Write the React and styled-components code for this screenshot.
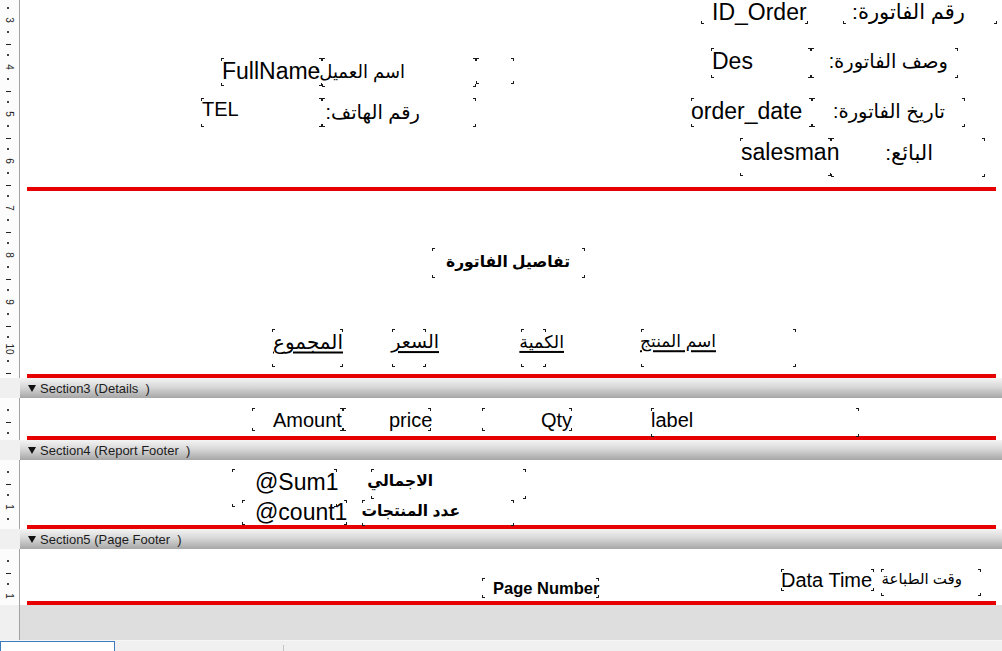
import React from "react";
import styled, { createGlobalStyle } from "styled-components";

const RED = "#e60000";
const UNIT = 47;
const FONT = `"Liberation Sans", Arial, "DejaVu Sans", sans-serif`;

const GlobalStyle = createGlobalStyle`
  html, body {
    margin: 0;
    padding: 0;
    background: #fff;
    overflow: hidden;
  }
  #root {
    width: 1002px;
    height: 651px;
  }
`;

const headFields = [
  { x: 701, y: -6, w: 107, h: 30, text: "ID_Order", size: 23, tx: 712, ty: 12 },
  { x: 843, y: -6, w: 154, h: 30, text: "رقم الفاتورة:", size: 21, rtl: true, tx: 965, ty: 12 },
  { x: 711, y: 48, w: 100, h: 30, text: "Des", size: 23, tx: 712, ty: 61 },
  { x: 811, y: 48, w: 147, h: 30, text: "وصف الفاتورة:", size: 19.5, rtl: true, tx: 948, ty: 61 },
  { x: 476, y: 58, w: 38, h: 26 },
  { x: 221, y: 58, w: 101, h: 28, text: "FullName", size: 23, tx: 222, ty: 71 },
  { x: 322, y: 58, w: 154, h: 29, text: "اسم العميل:", size: 18, rtl: true, tx: 405, ty: 72 },
  { x: 201, y: 98, w: 121, h: 29, text: "TEL", size: 20, tx: 202, ty: 109 },
  { x: 322, y: 98, w: 154, h: 29, text: "رقم الهاتف:", size: 19.5, rtl: true, tx: 420, ty: 112 },
  { x: 691, y: 98, w: 121, h: 29, text: "order_date", size: 23, tx: 691, ty: 111 },
  { x: 812, y: 98, w: 153, h: 29, text: "تاريخ الفاتورة:", size: 19.5, rtl: true, tx: 945, ty: 111 },
  { x: 740, y: 138, w: 91, h: 38, text: "salesman", size: 23, tx: 741, ty: 152 },
  { x: 831, y: 138, w: 154, h: 39, text: "البائع:", size: 21, rtl: true, tx: 933, ty: 153 },
  { x: 432, y: 248, w: 153, h: 30, text: "تفاصيل الفاتورة", size: 15.5, bold: true, rtl: true, tx: 570, ty: 262 },
  { x: 272, y: 329, w: 71, h: 38, text: "المجموع", size: 20, under: true, rtl: true, tx: 343, ty: 342 },
  { x: 392, y: 329, w: 34, h: 38, text: "السعر", size: 19, under: true, rtl: true, tx: 439, ty: 342 },
  { x: 521, y: 329, w: 25, h: 38, text: "الكمية", size: 17.5, under: true, rtl: true, tx: 564, ty: 342 },
  { x: 641, y: 329, w: 155, h: 38, text: "اسم المنتج", size: 17, under: true, rtl: true, tx: 716, ty: 342 },
];

const detailFields = [
  { x: 252, y: 408, w: 91, h: 23, text: "Amount", size: 20, tx: 273, ty: 420 },
  { x: 343, y: 408, w: 88, h: 23, text: "price", size: 20, tx: 389, ty: 420 },
  { x: 482, y: 408, w: 90, h: 23, text: "Qty", size: 20, tx: 541, ty: 420 },
  { x: 651, y: 408, w: 208, h: 29, text: "label", size: 20, tx: 651, ty: 420 },
];

const footerFields = [
  { x: 232, y: 469, w: 105, h: 38, text: "@Sum1", size: 23, tx: 255, ty: 482 },
  { x: 371, y: 469, w: 155, h: 30, text: "الاجمالي", size: 15.5, bold: true, rtl: true, tx: 433, ty: 481 },
  { x: 242, y: 500, w: 105, h: 25, text: "@count1", size: 23, tx: 255, ty: 512 },
  { x: 362, y: 500, w: 152, h: 26, text: "عدد المنتجات", size: 15.5, bold: true, rtl: true, tx: 460, ty: 511 },
];

const pageFooterFields = [
  { x: 482, y: 578, w: 117, h: 20, text: "Page Number", size: 16.5, bold: true, tx: 493, ty: 588 },
  { x: 781, y: 569, w: 93, h: 22, text: "Data Time", size: 20, tx: 781, ty: 580 },
  { x: 881, y: 569, w: 100, h: 27, text: "وقت الطباعة", size: 15, rtl: true, tx: 962, ty: 579 },
];

const sections = [
  { id: "head", top: 0, height: 378, rulerStart: -121, fields: headFields, lines: [187] },
  { id: "details", band: "Section3 (Details  )", top: 398, height: 42, rulerStart: 0, fields: detailFields },
  { id: "rfooter", band: "Section4 (Report Footer  )", top: 460, height: 69, rulerStart: 0, fields: footerFields },
  { id: "pfooter", band: "Section5 (Page Footer  )", top: 549, height: 56, rulerStart: 0, fields: pageFooterFields },
];

function Ruler({ height, start }) {
  const step = UNIT / 4;
  const marks = [];
  for (let k = Math.floor(-start / step) + 1; start + k * step < height; k++) {
    const pos = start + k * step;
    if (k % 4 === 0) {
      marks.push(
        <text
          key={k}
          x="9.5"
          y={pos}
          fontSize="10"
          fontFamily={FONT}
          fill="#222"
          textAnchor="middle"
          dominantBaseline="central"
          transform={`rotate(90 9.5 ${pos})`}
        >
          {k / 4}
        </text>
      );
    } else if (k % 4 === 2) {
      marks.push(<rect key={k} x="6" y={Math.round(pos)} width="5" height="1" fill="#222" />);
    } else {
      marks.push(<rect key={k} x="7" y={Math.round(pos) - 1} width="2" height="2" fill="#444" />);
    }
  }
  return (
    <RulerStrip>
      <svg width="19" height={height}>{marks}</svg>
    </RulerStrip>
  );
}

function Field({ f, top }) {
  return (
    <FieldBox $x={f.x - 20} $y={f.y - top} $w={f.w} $h={f.h}>
      {f.text && (
        <Caption
          dir={f.rtl ? "rtl" : "ltr"}
          $size={f.size}
          $bold={f.bold}
          $under={f.under}
          $left={f.rtl ? null : f.tx - f.x}
          $right={f.rtl ? f.x + f.w - f.tx : null}
          $top={f.ty - f.y}
        >
          {f.text}
        </Caption>
      )}
    </FieldBox>
  );
}

function Band({ title }) {
  return (
    <BandRow>
      <BandStub />
      <BandBar>
        <Arrow />
        <BandTitle>{title}</BandTitle>
      </BandBar>
    </BandRow>
  );
}

function Section({ s }) {
  return (
    <>
      {s.band && <Band title={s.band} />}
      <SectionRow $h={s.height}>
        <Ruler height={s.height} start={s.rulerStart} />
        <SectionBody>
          <Canvas>
            {(s.lines || []).map((y) => (
              <LineObject key={y} $y={y - s.top} />
            ))}
            {s.fields.map((f, i) => (
              <Field key={i} f={f} top={s.top} />
            ))}
          </Canvas>
          <SectionRule />
        </SectionBody>
      </SectionRow>
    </>
  );
}

export default function App() {
  return (
    <>
      <GlobalStyle />
      <Designer>
        <Workspace>
          {sections.map((s) => (
            <Section key={s.id} s={s} />
          ))}
          <EmptyArea>
            <BandStub $line />
            <GrayFill />
          </EmptyArea>
        </Workspace>
        <StatusBar>
          <ActiveTab />
          <Divider />
        </StatusBar>
      </Designer>
    </>
  );
}

const Designer = styled.div`
  width: 1002px;
  height: 651px;
  display: flex;
  flex-direction: column;
  overflow: hidden;
  font-family: ${FONT};
  background: #fff;
`;

const Workspace = styled.div`
  flex: 1;
  display: flex;
  flex-direction: column;
`;

const SectionRow = styled.div`
  display: flex;
  height: ${(p) => p.$h}px;
`;

const RulerStrip = styled.div`
  width: 19px;
  flex: none;
  background: #fcfcfc;
  border-right: 1px solid #a3a3a3;
  overflow: hidden;
`;

const SectionBody = styled.div`
  flex: 1;
  display: flex;
  flex-direction: column;
  background: #fff;
`;

const Canvas = styled.div`
  flex: 1;
  position: relative;
`;

const SectionRule = styled.div`
  height: 4px;
  margin: 0 6px 0 7px;
  background: ${RED};
`;

const LineObject = styled.div`
  position: absolute;
  left: 7px;
  right: 6px;
  top: ${(p) => p.$y}px;
  height: 4px;
  background: ${RED};
`;

const FieldBox = styled.div`
  position: absolute;
  left: ${(p) => p.$x}px;
  top: ${(p) => p.$y}px;
  width: ${(p) => p.$w}px;
  height: ${(p) => p.$h}px;
  background:
    linear-gradient(#1a1a1a, #1a1a1a) left top / 1px 3px no-repeat,
    linear-gradient(#1a1a1a, #1a1a1a) left top / 3px 1px no-repeat,
    linear-gradient(#1a1a1a, #1a1a1a) right top / 1px 3px no-repeat,
    linear-gradient(#1a1a1a, #1a1a1a) right top / 3px 1px no-repeat,
    linear-gradient(#1a1a1a, #1a1a1a) left bottom / 1px 3px no-repeat,
    linear-gradient(#1a1a1a, #1a1a1a) left bottom / 3px 1px no-repeat,
    linear-gradient(#1a1a1a, #1a1a1a) right bottom / 1px 3px no-repeat,
    linear-gradient(#1a1a1a, #1a1a1a) right bottom / 3px 1px no-repeat;
`;

const Caption = styled.span`
  position: absolute;
  top: ${(p) => p.$top}px;
  ${(p) => (p.$left !== null ? `left: ${p.$left}px;` : `right: ${p.$right}px;`)}
  transform: translateY(-50%);
  white-space: nowrap;
  line-height: 1.15;
  color: #000;
  font-family: ${FONT};
  font-size: ${(p) => p.$size}px;
  font-weight: ${(p) => (p.$bold ? 700 : 400)};
  text-decoration: ${(p) => (p.$under ? "underline" : "none")};
  text-decoration-thickness: 2px;
  text-underline-offset: 3px;
`;

const BandRow = styled.div`
  display: flex;
  height: 20px;
`;

const BandStub = styled.div`
  width: ${(p) => (p.$line ? 19 : 20)}px;
  flex: none;
  background: #f0f0f0;
  border-right: ${(p) => (p.$line ? "1px solid #a3a3a3" : "none")};
`;

const BandBar = styled.div`
  flex: 1;
  display: flex;
  align-items: center;
  gap: 4px;
  padding-left: 8px;
  background: linear-gradient(#f4f4f4 0%, #d8d8d8 45%, #a6a6a6 100%);
`;

const Arrow = styled.span`
  width: 0;
  height: 0;
  border-left: 4.5px solid transparent;
  border-right: 4.5px solid transparent;
  border-top: 7px solid #111;
`;

const BandTitle = styled.span`
  font-size: 13px;
  color: #1c1c1c;
  white-space: pre;
`;

const EmptyArea = styled.div`
  flex: 1;
  display: flex;
`;

const GrayFill = styled.div`
  flex: 1;
  background: #dedede;
`;

const StatusBar = styled.div`
  height: 10px;
  flex: none;
  position: relative;
  background: #f0f0f0;
  border-top: 1px solid #f7f7f7;
`;

const ActiveTab = styled.div`
  position: absolute;
  left: 0;
  top: 0;
  width: 113px;
  height: 12px;
  background: #fff;
  border: 1px solid #3c7bbd;
  border-bottom: none;
`;

const Divider = styled.div`
  position: absolute;
  left: 283px;
  top: 4px;
  width: 1px;
  height: 8px;
  background: #c4c4c4;
`;
